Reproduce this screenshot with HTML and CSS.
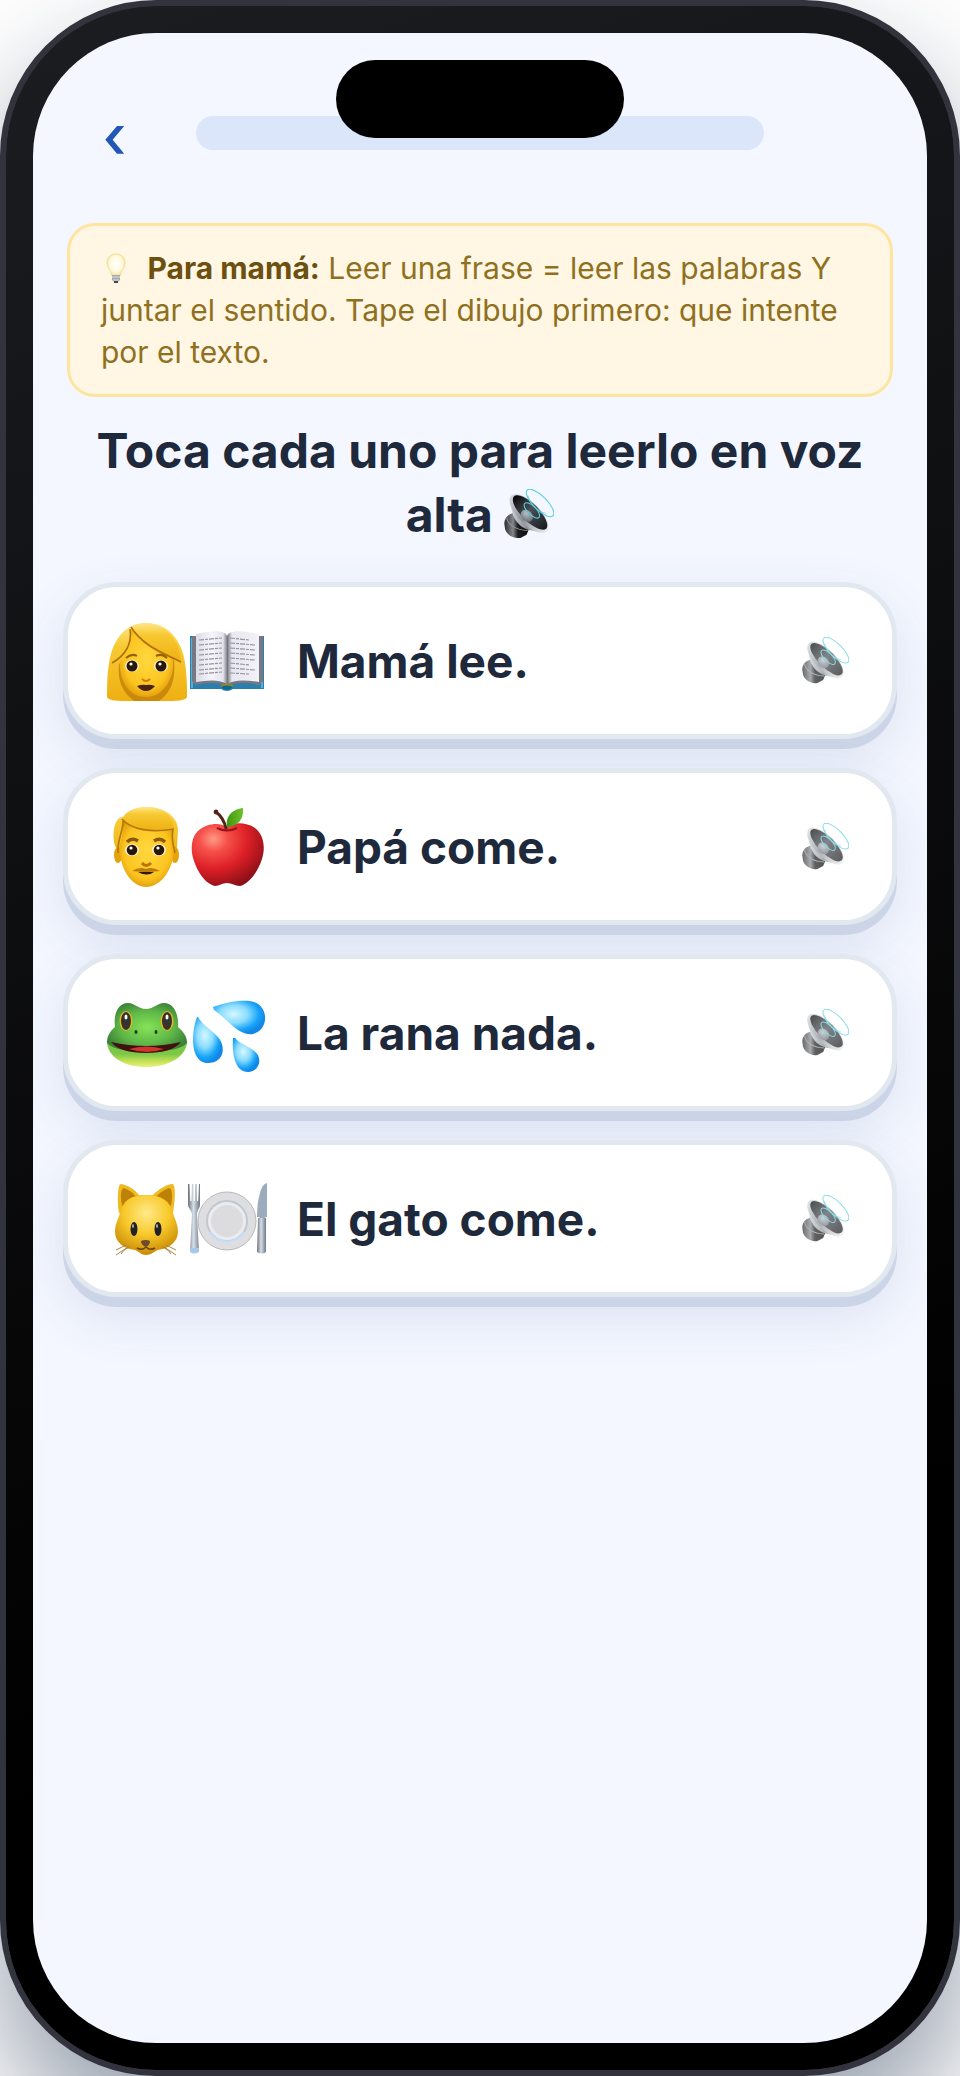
FILE: index.html
```
<!DOCTYPE html>
<html lang="es">
<head>
<meta charset="utf-8">
<meta name="viewport" content="width=device-width, initial-scale=1">
<title>Leer frases</title>
<link rel="stylesheet" href="styles.css">
</head>
<body>
<svg class="defs" aria-hidden="true">
  <defs>
    <linearGradient id="hair" x1="0" y1="0" x2="0" y2="1"><stop offset="0" stop-color="#ffe68a"/><stop offset=".3" stop-color="#f8c932"/><stop offset="1" stop-color="#eeb012"/></linearGradient>
    <radialGradient id="skin" cx=".5" cy=".45" r=".6"><stop offset="0" stop-color="#ffd83f"/><stop offset=".7" stop-color="#fcc41f"/><stop offset="1" stop-color="#dc9708"/></radialGradient>
    <radialGradient id="cat" cx=".5" cy=".3" r=".7"><stop offset="0" stop-color="#ffe98a"/><stop offset=".5" stop-color="#f9ca2c"/><stop offset="1" stop-color="#c98a05"/></radialGradient>
    <radialGradient id="apple" cx=".3" cy=".25" r=".8"><stop offset="0" stop-color="#ff9a86"/><stop offset=".25" stop-color="#f6504a"/><stop offset=".6" stop-color="#dd1f26"/><stop offset="1" stop-color="#8d1018"/></radialGradient>
    <linearGradient id="leaf"><stop offset="0" stop-color="#3c9610"/><stop offset="1" stop-color="#6fc22a"/></linearGradient>
    <radialGradient id="frog" cx=".5" cy=".5" r=".55"><stop offset="0" stop-color="#86e356"/><stop offset=".6" stop-color="#5fb848"/><stop offset="1" stop-color="#3c8338"/></radialGradient>
    <linearGradient id="jaw" x1="0" y1="0" x2="0" y2="1"><stop offset=".5" stop-color="#7cc846"/><stop offset=".8" stop-color="#c9e35a"/><stop offset="1" stop-color="#e6f27c"/></linearGradient>
    <radialGradient id="drop" cx=".4" cy=".4" r=".6"><stop offset="0" stop-color="#d5f8ff"/><stop offset=".45" stop-color="#8adcff"/><stop offset=".8" stop-color="#18a4f8"/><stop offset="1" stop-color="#1188e6"/></radialGradient>
    <linearGradient id="page"><stop offset="0" stop-color="#dcdbe6"/><stop offset=".25" stop-color="#f6f5fb"/><stop offset=".43" stop-color="#e4e3ee"/><stop offset=".5" stop-color="#77777f"/><stop offset=".57" stop-color="#e8e7f0"/><stop offset="1" stop-color="#f3f2f9"/></linearGradient>
    <linearGradient id="steel"><stop offset="0" stop-color="#6d7075"/><stop offset=".45" stop-color="#d6dfe9"/><stop offset="1" stop-color="#6f7986"/></linearGradient>
    <linearGradient id="barrel"><stop offset="0" stop-color="#2a2b2d"/><stop offset=".35" stop-color="#85878a"/><stop offset=".55" stop-color="#1c1d1f"/><stop offset="1" stop-color="#0c0c0d"/></linearGradient>
    <linearGradient id="rim"><stop offset="0" stop-color="#d3d8de"/><stop offset=".5" stop-color="#8b8f94"/><stop offset="1" stop-color="#eceef0"/></linearGradient>
    <linearGradient id="cone"><stop offset="0" stop-color="#060607"/><stop offset=".45" stop-color="#4b5056"/><stop offset="1" stop-color="#191b1e"/></linearGradient>
    <radialGradient id="dome" cx=".35" cy=".4" r=".7"><stop offset="0" stop-color="#b7bfc8"/><stop offset="1" stop-color="#666d75"/></radialGradient>
    <radialGradient id="glass" cx=".5" cy=".45" r=".6"><stop offset="0" stop-color="#ffffff"/><stop offset=".6" stop-color="#fff9dc"/><stop offset="1" stop-color="#f6dc84"/></radialGradient>
    <symbol id="speaker" viewBox="0 0 140 140">
      <path d="M24 68C8 72 0 86 1 98L3 112C8 130 28 140 46 137L63 128 70 112 31 65Z" fill="url(#barrel)"/>
      <path d="M8 80C8 98 34 116 66 116" fill="none" stroke="#8f9398" stroke-width="3"/>
      <path d="M16 36L26 76C38 100 56 114 82 117L112 124Z" fill="url(#rim)"/>
      <ellipse cx="70" cy="69" rx="71" ry="30" transform="rotate(45 70 69)" fill="url(#rim)"/>
      <ellipse cx="73" cy="66" rx="64" ry="24" transform="rotate(45 73 66)" fill="url(#cone)"/>
      <ellipse cx="64" cy="75" rx="19" ry="15" transform="rotate(45 64 75)" fill="url(#dome)"/>
      <g fill="none" stroke="#55cfdf" stroke-width="3"><ellipse cx="101" cy="39" rx="51" ry="19" transform="rotate(45 101 39)"/><ellipse cx="78" cy="60" rx="28" ry="12" transform="rotate(45 78 60)"/><path d="M67 19C72 40 92 62 116 68" stroke-width="2"/></g>
    </symbol>
  </defs>
</svg>
<main class="device">
  <div class="screen">
    <div class="notch"></div>
    <header class="topbar">
      <button class="back" type="button" aria-label="Volver">‹</button>
      <div class="progress" role="progressbar" aria-label="Progreso" aria-valuenow="0" aria-valuemin="0" aria-valuemax="100"></div>
      <div class="topbar-end"></div>
    </header>
    <p class="tip"><svg class="bulb" viewBox="0 0 30 30" aria-hidden="true"><path d="M15 1C9 1 6 5 6 10c0 5 4 7 5 13h8c1-6 5-8 5-13C24 5 21 1 15 1Z" fill="url(#glass)" stroke="#f3dc92"/><path d="M11 22h8v5l-2 2h-4l-2-2Z" fill="#a3a6aa"/><path d="M11 24h8M12 27h6" stroke="#dfe2e6"/><path d="M13 29h4" stroke="#45474b" stroke-width="2"/></svg> <strong>Para mamá:</strong> Leer una frase = leer las palabras Y juntar el sentido. Tape el dibujo primero: que intente por el texto.</p>
    <h1 class="title">Toca cada uno para leerlo en voz alta <svg class="title-icon" aria-hidden="true"><use href="#speaker"/></svg></h1>
    <div class="list">
      <button class="card" type="button">
        <span class="art">
          <svg viewBox="0 0 80 80" aria-hidden="true">
            <path d="M39 2C20 2 6 16 2 42 0 55 0 67 0 76c1 3 8 4 18 4h44c10 0 17-1 18-4 0-9 0-21-2-34C74 16 59 2 39 2Z" fill="url(#hair)"/>
            <path d="M12 43C10 60 16 72 27 80H52C63 72 69 60 67 39L39 16Z" fill="#bf7b08" opacity=".75"/>
            <path d="M13 42C20 36 23 22 24 8 34 22 50 32 66 38c2 20-10 38-27 38S12 60 13 42Z" fill="url(#skin)"/>
            <path d="M24 6C35 24 54 31 74 41 73 20 60 3 39 2c-6 0-11 1-15 4Z" fill="url(#hair)"/>
            <path d="M24 6C35 24 54 31 74 41M23 8C25 22 19 34 5 42" fill="none" stroke="#ad6f05" stroke-width="1.5"/>
            <path d="M19 37q6-5 11-2M49 35q6-3 11 2" fill="none" stroke="#96610a" stroke-width="2"/>
            <ellipse cx="25" cy="45" rx="7" ry="6" fill="#fff2d6"/><ellipse cx="54" cy="45" rx="7" ry="6" fill="#fff2d6"/>
            <circle cx="25" cy="45" r="5.5" fill="#28180a"/><circle cx="54" cy="45" r="5.5" fill="#28180a"/>
            <circle cx="24" cy="43" r="1.6" fill="#fff"/><circle cx="53" cy="43" r="1.6" fill="#fff"/>
            <path d="M35 58q4 4 8 0" fill="none" stroke="#cc8008" stroke-width="2"/>
            <path d="M30 65q5-2 9-1 4-1 9 1-4 5-9 5t-9-5Z" fill="#4c2210"/>
          </svg>
          <svg viewBox="0 0 80 80" aria-hidden="true">
            <path d="M3 15h74v53H46q-6 4-12 0H3Z" fill="#2b7fac"/><path d="M5 17v50M75 17v50" stroke="#58aed2" stroke-width="2"/>
            <path d="M8 64q16-4 32 0 16-4 32 0l4-4V15H5v45Z" fill="#777982"/>
            <path d="M9 13q20-4 26-2 4 1 5 4 1-3 5-4 7-2 27 2v48q-23-4-32 2-9-6-31-2Z" fill="url(#page)"/>
            <path d="M12 19l23-2M12 24l23-2M12 29l23-2M12 34l23-2M12 39l23-2M12 44l23-2M12 49l23-2M12 53l23-2M43 17l19 2M43 22l25 2M43 27l25 2M43 32l25 2M43 37l25 2M43 42l20 2M43 47l25 2M43 52l19 1" stroke="#94949c" stroke-width="1.2" stroke-dasharray="5 1 3 1"/>
            <path d="M34 66q6-4 12 0-6 6-12 0Z" fill="#096a93"/><path d="M34 65q6-3 12 0" fill="none" stroke="#9a8422" stroke-width="2"/>
          </svg>
        </span>
        <span class="label">Mamá lee.</span>
        <svg class="speaker" aria-hidden="true"><use href="#speaker"/></svg>
      </button>
      <button class="card" type="button">
        <span class="art">
          <svg viewBox="0 0 80 80" aria-hidden="true">
            <path d="M8 39C4 24 9 8 17 10c5-7 14-10 23-10 16 0 30 8 31 22l-1 18-7 10H15Z" fill="url(#hair)"/>
            <ellipse cx="11" cy="48" rx="4" ry="8" fill="#e5a20b"/><ellipse cx="68" cy="48" rx="4" ry="8" fill="#e5a20b"/>
            <path d="M13 40q3-10 3-26 20 14 49 9 0 10 2 18C67 62 54 80 39 80S12 60 13 40Z" fill="url(#skin)"/>
            <path d="M15 12C24 23 45 26 67 22 66 7 54 0 39 0 25 0 18 6 15 12Z" fill="url(#hair)"/>
            <path d="M15 12C24 23 45 26 67 22M16 14c0 12-6 18-5 32M66 23q-2 7 2 23" fill="none" stroke="#b47807" stroke-width="1.6"/>
            <path d="M20 35q5-5 11-1M47 34q6-4 11 1" fill="none" stroke="#8b5a08" stroke-width="3.5"/>
            <ellipse cx="25" cy="43" rx="7" ry="6" fill="#fff2d6"/><ellipse cx="52" cy="43" rx="7" ry="6" fill="#fff2d6"/>
            <circle cx="25" cy="43" r="5.3" fill="#28180a"/><circle cx="52" cy="43" r="5.3" fill="#28180a"/><circle cx="24" cy="41" r="1.6" fill="#fff"/><circle cx="51" cy="41" r="1.6" fill="#fff"/>
            <path d="M35 56q4 5 9 0" fill="none" stroke="#bb7505" stroke-width="3"/>
            <path d="M25 64q8-5 14-2 6-3 14 2-14 2-28 0Z" fill="#bb7c0c"/><path d="M31 65h16q-7 5-16 0Z" fill="#321a0a"/>
          </svg>
          <svg viewBox="0 0 80 80" aria-hidden="true">
            <path d="M39 20C34 15 20 16 12 23 4 30 3 43 7 54 11 66 18 75 25 78c5 3 9-2 15-2s11 5 16 2c8-4 15-14 19-26 4-13 1-25-7-31-9-6-22-6-29-1Z" fill="url(#apple)"/>
            <path d="M30 21q10 5 20 0" stroke="#9b1118" stroke-width="2" fill="none"/><path d="M29 5q7 5 10 16" stroke="#572517" stroke-width="3" fill="none" stroke-linecap="round"/><circle cx="29" cy="5" r="2.4" fill="#572517"/>
            <path d="M40 20C38 9 46 2 56 1c1 10-4 18-16 19Z" fill="url(#leaf)"/>
          </svg>
        </span>
        <span class="label">Papá come.</span>
        <svg class="speaker" aria-hidden="true"><use href="#speaker"/></svg>
      </button>
      <button class="card" type="button">
        <span class="art">
          <svg viewBox="0 0 80 80" aria-hidden="true">
            <path d="M0 48C0 64 17 74 39 74s41-10 41-26Z" fill="url(#jaw)"/>
            <path d="M8 34C6 20 12 10 21 10c7 0 10 6 18 6s11-6 18-6c9 0 15 10 14 24 6 5 9 10 9 16-9 12-71 12-80 0 0-6 2-11 8-16Z" fill="url(#frog)"/>
            <ellipse cx="19" cy="28" rx="6.5" ry="10" fill="#e3b61b"/><ellipse cx="60" cy="28" rx="6.5" ry="10" fill="#e3b61b"/>
            <ellipse cx="19" cy="28" rx="5" ry="9" fill="#34342c"/><ellipse cx="60" cy="28" rx="5" ry="9" fill="#34342c"/><ellipse cx="19" cy="24" rx="1.5" ry="2.5" fill="#fff"/><ellipse cx="60" cy="24" rx="1.5" ry="2.5" fill="#fff"/>
            <ellipse cx="29" cy="39" rx="1.5" ry="2" fill="#174018"/><ellipse cx="49" cy="39" rx="1.5" ry="2" fill="#174018"/>
            <path d="M4 49q35 8 70 0Q65 60 39 60T4 49Z" fill="#41100f"/><path d="M22 56q17-5 35 0-17 6-35 0Z" fill="#cf352e"/>
          </svg>
          <svg viewBox="0 0 80 80" aria-hidden="true">
            <path d="M10 24C4 40 3 70 21 70 38 70 40 52 29 42 22 35 15 31 11 24Z" fill="url(#drop)"/>
            <path d="M26 14C39 9 58 6 67 9 82 14 82 37 66 41 51 43 43 28 27 17Z" fill="url(#drop)"/>
            <path d="M46 45C45 58 47 79 61 79 74 78 76 63 66 57 59 52 52 50 48 45Z" fill="url(#drop)"/>
          </svg>
        </span>
        <span class="label">La rana nada.</span>
        <svg class="speaker" aria-hidden="true"><use href="#speaker"/></svg>
      </button>
      <button class="card" type="button">
        <span class="art">
          <svg viewBox="0 0 80 80" aria-hidden="true">
            <path d="M12 34C10 20 11 4 14 5c7 1 14 6 18 11h14c5-5 13-11 20-11 3 3 2 18 0 29Z" fill="#efba20"/><path d="M15 27C13 15 14 10 17 9q8 3 12 9ZM64 27c2-12 1-17-2-18q-8 3-13 9Z" fill="#bd8106"/>
            <path d="M39 16C23 16 16 22 13 34 11 41 8 45 8 53c0 10 9 17 20 18 5 2 6 5 11 5s7-3 12-5c10-1 20-8 20-18 0-8-3-12-5-19C63 22 55 16 39 16Z" fill="url(#cat)"/>
            <ellipse cx="27" cy="50" rx="3.5" ry="7" fill="#222126"/><ellipse cx="51" cy="50" rx="3.5" ry="7" fill="#222126"/><ellipse cx="26" cy="47" rx="1" ry="2" fill="#aaa"/><ellipse cx="50" cy="47" rx="1" ry="2" fill="#aaa"/>
            <path d="M34 62q5-2 9 0 0 4-4 6-5-2-5-6Z" fill="#6c4a2d"/><path d="M39 68q-4 4-9 1M39 68q4 4 9 1" fill="none" stroke="#694205" stroke-width="1.5"/>
            <path d="M19 66L9 71M21 68L9 76M22 68q-6 3-8 7M59 66l10 5M57 68l12 8M56 68q6 3 8 7" stroke="#aa8542" fill="none"/>
          </svg>
          <svg viewBox="0 0 80 80" aria-hidden="true">
            <circle cx="40" cy="42" r="29" fill="#dedee0" stroke="#b9b9bb"/><circle cx="40" cy="42" r="20" fill="#ececee" stroke="#c1c8d2" stroke-width="2"/><circle cx="40" cy="42" r="16" fill="#dcdcde"/><path d="M23 53a20 20 0 0 0 34 0" fill="none" stroke="#c3dffc" stroke-width="2"/>
            <path d="M1 5h1.500l.8 17h1.200L5 5h1.300l.5 17h1L8.300 5h1.300l.4 17h1.100L12 5h1v20c0 5-3 6-3 11l2 36q-5 4-9 0l2-36c0-5-4-6-4-11Z" fill="url(#steel)"/><path d="M3 69h9v4q-5 3-9 0Z" fill="#a7c9ec"/>
            <path d="M80 4q-5 1-7 10-3 10-3 24h2q3 4 7 0h1Z" fill="#9dacbc"/><path d="M71 39h8v34q-4 3-9 0Z" fill="url(#steel)"/>
          </svg>
        </span>
        <span class="label">El gato come.</span>
        <svg class="speaker" aria-hidden="true"><use href="#speaker"/></svg>
      </button>
    </div>
  </div>
</main>
</body>
</html>
```
FILE: styles.css
```
* {
  box-sizing: border-box;
}

body {
  margin: 0;
  min-height: 100vh;
  display: flex;
  background: #fff;
  color: #1e293b;
  font-family: Inter, "Noto Sans", sans-serif;
}

.defs {
  position: absolute;
  width: 0;
  height: 0;
}

.device {
  flex: 1;
  display: flex;
  min-width: 0;
  padding: 27px;
  border: 6px solid #33333d;
  border-radius: 156px;
  background: linear-gradient(160deg, #1c1d21, #000 75%) padding-box, #33333d;
  box-shadow: 0 60px 120px rgba(15, 35, 65, 0.45);
}

.screen {
  position: relative;
  flex: 1;
  min-width: 0;
  padding: 60px 30px;
  border-radius: 123px;
  background: #f4f7ff;
  overflow: hidden;
}

.notch {
  position: absolute;
  z-index: 1;
  top: 27px;
  left: 50%;
  width: 288px;
  height: 78px;
  margin-left: -144px;
  border-radius: 39px;
  background: #000;
}

.topbar {
  display: flex;
  align-items: center;
  gap: 24px;
  height: 80px;
}

.back,
.topbar-end {
  width: 109px;
}

.back {
  height: 80px;
  padding: 6px 6px 0 0;
  border: 0;
  background: none;
  color: #2157b5;
  font: 500 60px/72px Inter, sans-serif;
}

.progress {
  flex: 1;
  height: 34px;
  border-radius: 17px;
  background: #dbe6fa;
}

.tip {
  margin: 50px 4px 0;
  padding: 21px 31px;
  border: 3px solid #fde5a0;
  border-radius: 28px;
  background: #fff7e4;
  color: #8f701f;
  font-size: 30px;
  line-height: 42px;
}

.tip strong {
  color: #6d4f10;
}

.bulb {
  width: 30px;
  height: 30px;
  margin-right: 8px;
  vertical-align: -4px;
}

.title {
  margin: 22px 0 35px;
  font-size: 48px;
  font-weight: 700;
  line-height: 64px;
  text-align: center;
}

.title-icon {
  width: 50px;
  height: 50px;
  vertical-align: -7px;
}

.list {
  display: grid;
  gap: 29px;
}

.card {
  display: flex;
  align-items: center;
  gap: 30px;
  width: 100%;
  height: 157px;
  padding: 0 43px 0 39px;
  border: 5px solid #e2e8f0;
  border-radius: 54px;
  background: #fff;
  box-shadow: 0 10px 0 #ccd5e7, 0 20px 54px rgba(40, 70, 140, 0.12);
  color: inherit;
  font: 700 46px/60px Inter, sans-serif;
  text-align: left;
}

.art {
  display: flex;
  flex: none;
}

.art svg {
  width: 80px;
  height: 80px;
}

.label {
  flex: 1;
}

.speaker {
  flex: none;
  width: 47px;
  height: 47px;
  opacity: 0.7;
}
```
